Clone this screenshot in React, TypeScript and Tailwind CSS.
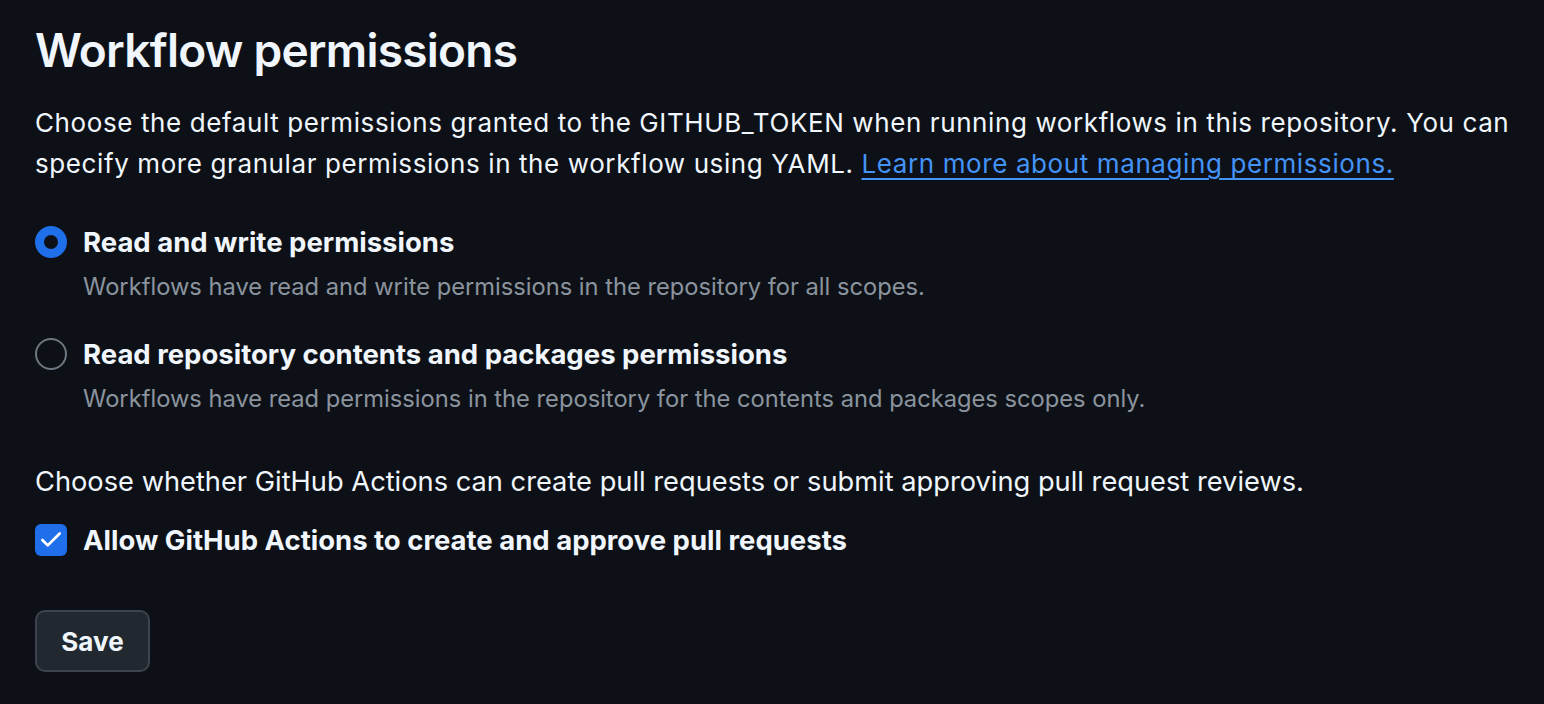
import { Check } from 'lucide-react';

function RadioOption({
  checked,
  label,
  description,
}: {
  checked: boolean;
  label: string;
  description: string;
}) {
  return (
    <label className="flex items-start gap-[16px]">
      <span
        className={`mt-[2px] shrink-0 w-[32px] h-[32px] rounded-full ${
          checked ? 'border-[9px] border-[#1f6feb] bg-[#0d1117]' : 'border-2 border-[#6e7681]'
        }`}
      />
      <span className="block">
        <span className="block text-[27.5px] leading-[36px] font-bold text-[#f0f6fc]">{label}</span>
        <span className="block text-[23.7px] leading-[32px] text-[#8b949e] mt-[11px]">{description}</span>
      </span>
    </label>
  );
}

export default function App() {
  return (
    <div
      className="min-h-[704px] bg-[#0d1117] text-[#f0f6fc] pl-[35px] pr-[10px] pt-[18px]"
      style={{ fontFamily: 'Inter, "Noto Sans", sans-serif' }}
    >
      <h2 className="text-[46px] leading-[64px] font-semibold tracking-[-0.75px]">Workflow permissions</h2>

      <p className="mt-[20px] text-[26px] leading-[41px] tracking-[0.6px]">
        Choose the default permissions granted to the GITHUB_TOKEN when running workflows in this repository. You can
        <br />
        specify more granular permissions in the workflow using YAML.{' '}
        <a href="#" className="text-[#4493f8] underline underline-offset-[5px] decoration-2">
          Learn more about managing permissions.
        </a>
      </p>

      <div className="mt-[40px] flex flex-col gap-[33px]">
        <RadioOption
          checked
          label="Read and write permissions"
          description="Workflows have read and write permissions in the repository for all scopes."
        />
        <RadioOption
          checked={false}
          label="Read repository contents and packages permissions"
          description="Workflows have read permissions in the repository for the contents and packages scopes only."
        />
      </div>

      <p className="mt-[46px] text-[27.25px] leading-[41px]">
        Choose whether GitHub Actions can create pull requests or submit approving pull request reviews.
      </p>

      <label className="mt-[20px] flex items-center gap-[16px]">
        <span className="w-[32px] h-[32px] rounded-[6px] bg-[#1f6feb] flex items-center justify-center">
          <Check className="w-[26px] h-[26px] text-white" strokeWidth={2.5} />
        </span>
        <span className="text-[27.5px] leading-[36px] font-bold">
          Allow GitHub Actions to create and approve pull requests
        </span>
      </label>

      <button
        type="button"
        className="mt-[52px] w-[115px] h-[62px] rounded-[10px] bg-[#212830] border-2 border-[#3d444d] text-[26px] font-bold text-[#f0f6fc]"
      >
        Save
      </button>
    </div>
  );
}
